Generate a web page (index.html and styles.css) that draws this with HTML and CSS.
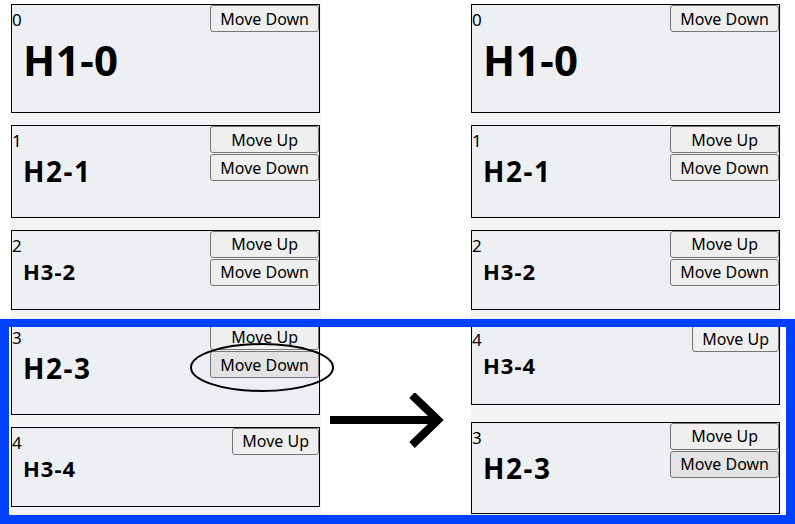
FILE: index.html
```html
<!DOCTYPE html>
<html lang="en">
<head>
    <meta charset="UTF-8">
    <meta name="viewport" content="width=device-width, initial-scale=1.0">
    <title>Heading order</title>
    <link rel="stylesheet" href="styles.css">
</head>
<body>
    <div class="page">
        <!-- before -->
        <div class="column">
            <div class="item">
                <div class="item-main">
                    <div class="item-index">0</div>
                    <h1 class="item-title">H1-0</h1>
                </div>
                <div class="item-actions">
                    <button class="btn">Move Down</button>
                </div>
            </div>
            <div class="item">
                <div class="item-main">
                    <div class="item-index">1</div>
                    <h2 class="item-title">H2-1</h2>
                </div>
                <div class="item-actions">
                    <button class="btn">Move Up</button>
                    <button class="btn">Move Down</button>
                </div>
            </div>
            <div class="item">
                <div class="item-main">
                    <div class="item-index">2</div>
                    <h3 class="item-title">H3-2</h3>
                </div>
                <div class="item-actions">
                    <button class="btn">Move Up</button>
                    <button class="btn">Move Down</button>
                </div>
            </div>
            <div class="item">
                <div class="item-main">
                    <div class="item-index">3</div>
                    <h2 class="item-title">H2-3</h2>
                </div>
                <div class="item-actions">
                    <button class="btn">Move Up</button>
                    <button class="btn is-hover">Move Down</button>
                </div>
            </div>
            <div class="item">
                <div class="item-main">
                    <div class="item-index">4</div>
                    <h3 class="item-title">H3-4</h3>
                </div>
                <div class="item-actions">
                    <button class="btn">Move Up</button>
                </div>
            </div>
        </div>

        <!-- after -->
        <div class="column">
            <div class="item">
                <div class="item-main">
                    <div class="item-index">0</div>
                    <h1 class="item-title">H1-0</h1>
                </div>
                <div class="item-actions">
                    <button class="btn">Move Down</button>
                </div>
            </div>
            <div class="item">
                <div class="item-main">
                    <div class="item-index">1</div>
                    <h2 class="item-title">H2-1</h2>
                </div>
                <div class="item-actions">
                    <button class="btn">Move Up</button>
                    <button class="btn">Move Down</button>
                </div>
            </div>
            <div class="item">
                <div class="item-main">
                    <div class="item-index">2</div>
                    <h3 class="item-title">H3-2</h3>
                </div>
                <div class="item-actions">
                    <button class="btn">Move Up</button>
                    <button class="btn">Move Down</button>
                </div>
            </div>
            <div class="item moved">
                <div class="item-main">
                    <div class="item-index">4</div>
                    <h3 class="item-title">H3-4</h3>
                </div>
                <div class="item-actions">
                    <button class="btn">Move Up</button>
                </div>
            </div>
            <div class="item moved moved-far">
                <div class="item-main">
                    <div class="item-index">3</div>
                    <h2 class="item-title">H2-3</h2>
                </div>
                <div class="item-actions">
                    <button class="btn">Move Up</button>
                    <button class="btn is-hover">Move Down</button>
                </div>
            </div>
        </div>

        <!-- highlight of the swap -->
        <div class="frame"></div>
        <svg class="circle-mark" width="146" height="51" viewBox="0 0 146 51">
            <ellipse cx="73" cy="25.5" rx="71" ry="23.5" fill="none" stroke="#000" stroke-width="2"/>
        </svg>
        <svg class="arrow" width="116" height="56" viewBox="0 0 116 56">
            <line x1="0" y1="27" x2="108" y2="27" stroke="#000" stroke-width="8"/>
            <polyline points="82,2 108,27 82,52" fill="none" stroke="#000" stroke-width="8"/>
        </svg>
    </div>
</body>
</html>
```

FILE: styles.css
```css
body { margin: 0; font-family: "Noto Sans", "Open Sans", sans-serif; color: #000; background: #fff; }
.page { position: relative; display: flex; gap: 150px; padding: 4px 0 0 11px; height: 520px; }
.column { width: 310px; display: flex; flex-direction: column; gap: 12px; align-self: flex-start; background: #f4f4f7; padding-bottom: 8px; }

.item { width: 309px; box-sizing: border-box; display: flex; justify-content: space-between; align-items: flex-start; border: 1px solid #000; background: #eeeff3; }
.item.moved { margin-top: 2px; }
.item.moved-far { margin-top: 5px; }
.item-main { padding-top: 3px; }
.item-index { font-size: 17px; line-height: 24px; }
.item-title { font-weight: 700; line-height: 1.2; padding-left: 11px; }
h1.item-title { font-size: 42px; margin: 3px 0 27px; letter-spacing: 0.5px; }
h2.item-title { font-size: 28px; margin: 2px 0 28px; letter-spacing: 1.5px; }
h3.item-title { font-size: 22px; margin: 0 0 25px; letter-spacing: 1px; }

.item-actions { display: flex; flex-direction: column; gap: 1px; }
.btn { height: 27px; padding: 0 9px; font-family: "Noto Sans", "Open Sans", sans-serif; font-size: 16px; color: #000; background: #efefef; border: 1px solid #767676; border-radius: 3px; cursor: pointer; }
.btn.is-hover { background: #e3e3e3; }

/* annotations drawn over the lists */
.frame { position: absolute; left: 0; top: 319px; width: 795px; height: 205px; box-sizing: border-box; border: 9px solid #0040ff; border-top-width: 8px; }
.circle-mark { position: absolute; left: 189px; top: 342px; }
.arrow { position: absolute; left: 330px; top: 393px; }
```
